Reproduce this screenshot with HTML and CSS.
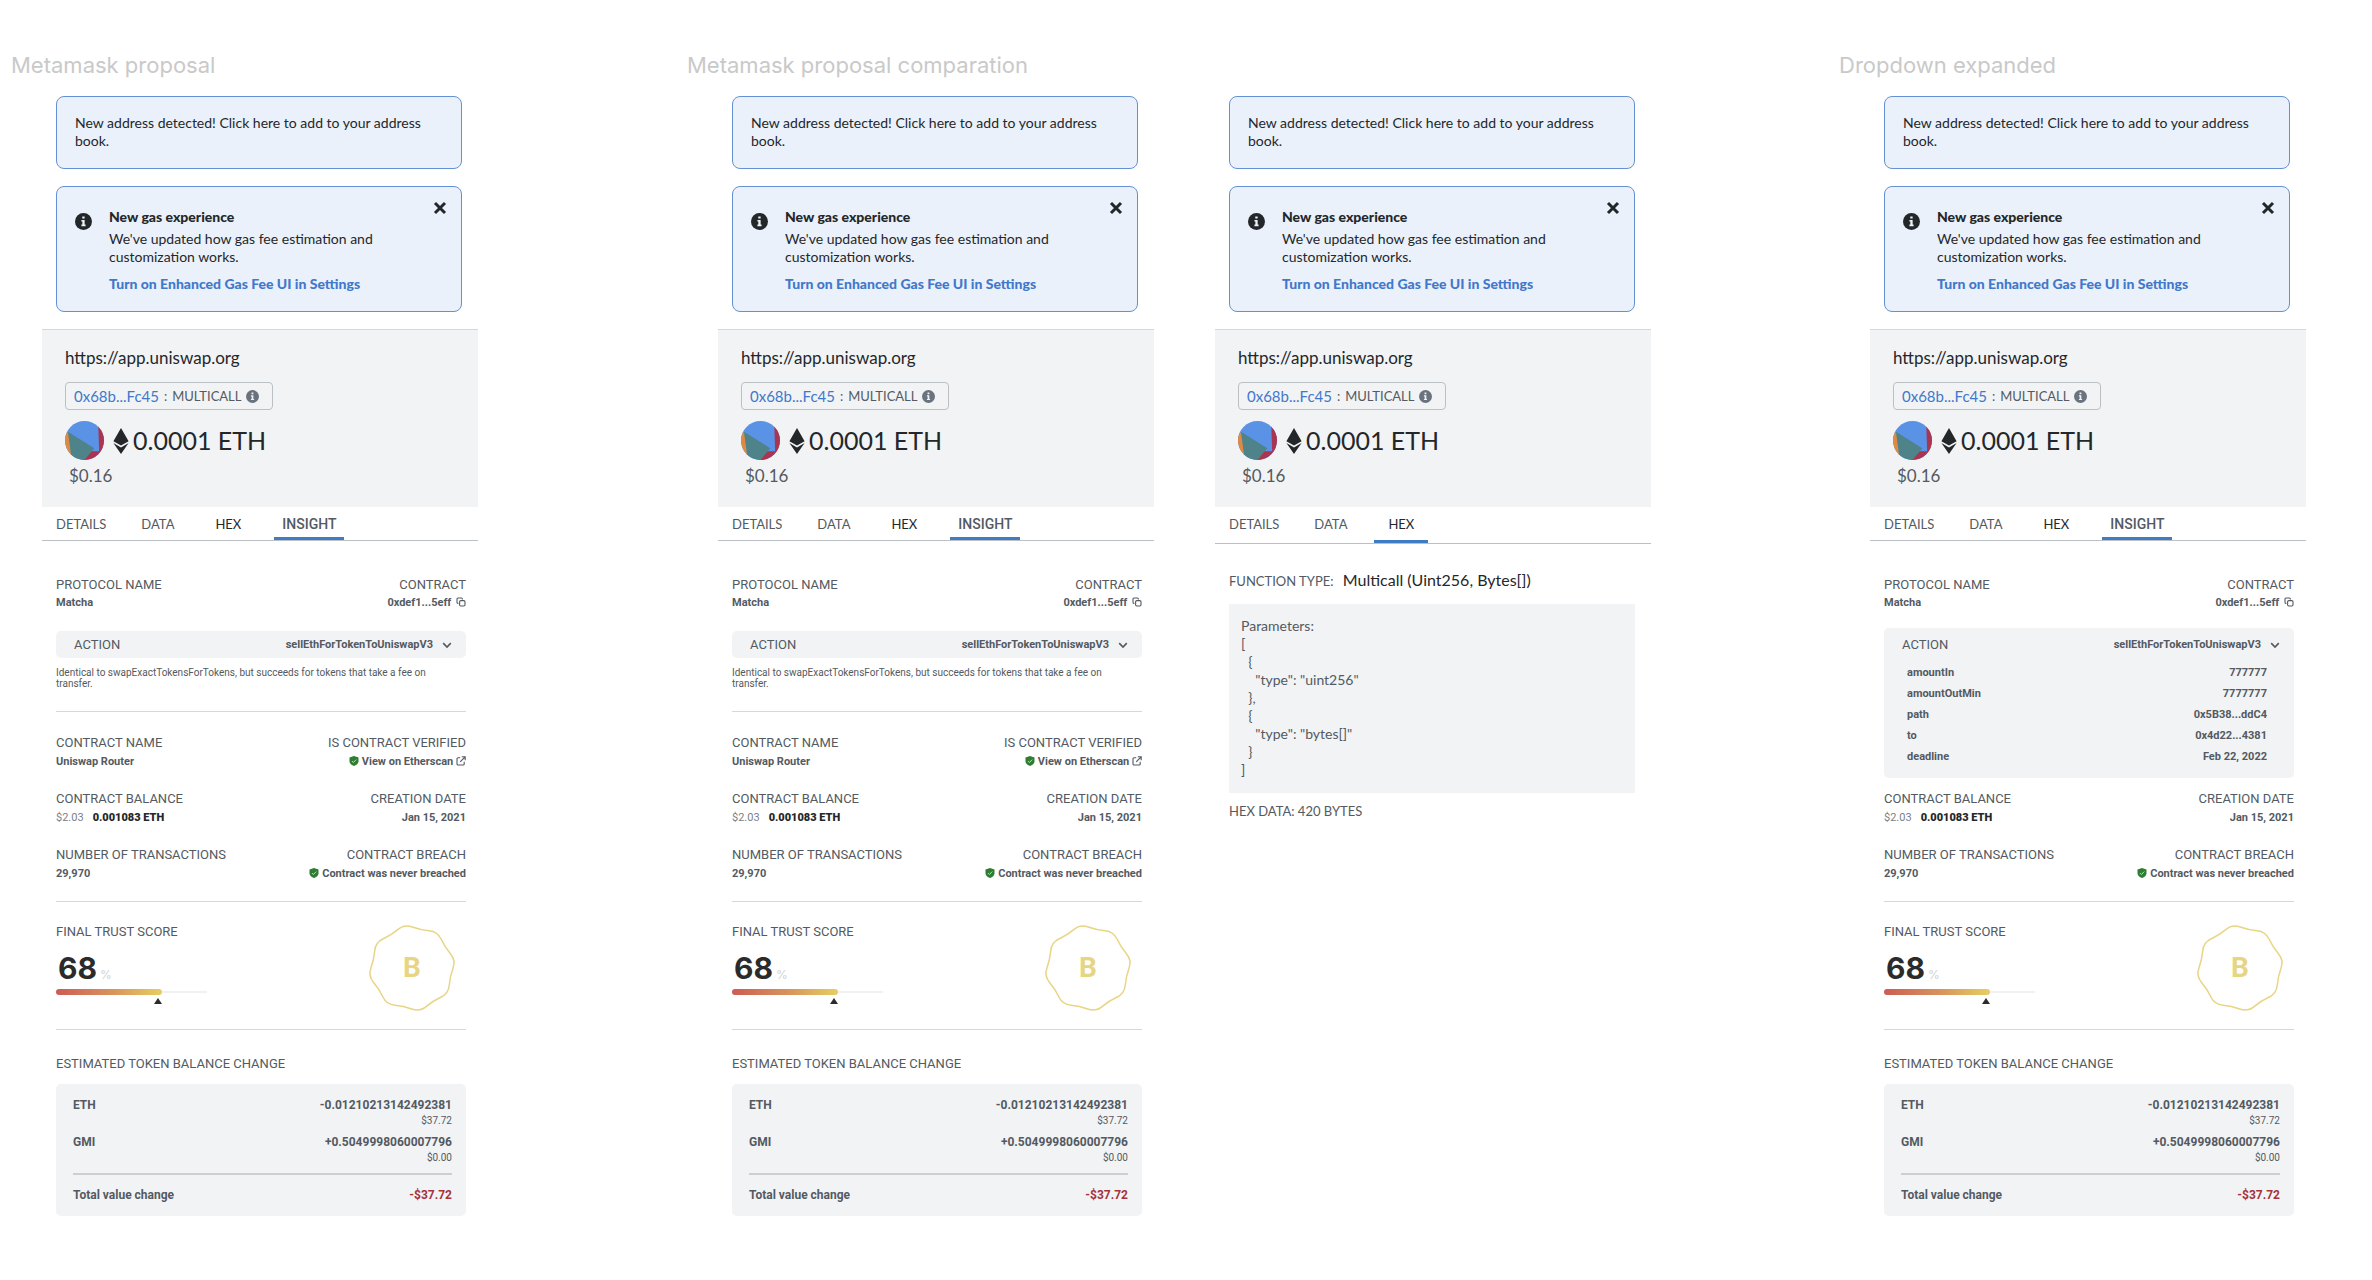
FILE: index.html
```
<!DOCTYPE html>
<html lang="en">
  <head>
    <meta charset="UTF-8" />
    <meta name="viewport" content="width=device-width, initial-scale=1" />
    <title>Metamask proposal</title>
    <link rel="stylesheet" href="styles.css">
  </head>
  <body>
    <!-- shared icons -->
    <svg class="sprite" aria-hidden="true">
      <symbol id="i-info" viewBox="0 0 18 18">
        <circle cx="9" cy="9" r="9" fill="currentColor" />
        <path class="info-mark" d="M7.7 3.6h2.5v2.3H7.7zM6.8 7.3h3.4v5h1v1.6H6.8v-1.6h1V8.9h-1z" />
      </symbol>
      <symbol id="i-close" viewBox="0 0 14 14">
        <path d="M2 2l10 10M12 2L2 12" fill="none" stroke="currentColor" stroke-width="3" />
      </symbol>
      <symbol id="i-avatar" viewBox="0 0 40 40">
        <clipPath id="round"><circle cx="20" cy="20" r="20" /></clipPath>
        <g clip-path="url(#round)">
          <path fill="#5a92e6" d="M0 0h40v40H0z" />
          <path fill="#dd8a45" d="M0 12l4 0 3 28H0z" />
          <path fill="#a93550" d="M34 0h6v40H18l8-9 9 0z" />
          <path fill="#4d8389" d="M3 11l27 17-10 12H7z" />
        </g>
      </symbol>
      <symbol id="i-eth" viewBox="0 0 16 26">
        <path fill="currentColor" d="M8 0l7.6 13.2L8 17.6.4 13.2zM.4 15.1L8 19.5l7.6-4.4L8 26z" />
      </symbol>
      <symbol id="i-copy" viewBox="0 0 10 10">
        <g fill="none" stroke="currentColor" stroke-width="1.1">
          <rect x="3.6" y="3.6" width="5.4" height="5.4" rx="1.2" />
          <path d="M2.4 6.4H1.9A1 1 0 0 1 1 5.4V2a1 1 0 0 1 1-1h3.400a1 1 0 0 1 1 1v.5" />
        </g>
      </symbol>
      <symbol id="i-chevron" viewBox="0 0 10 10">
        <path d="M1.2 3.100L5 7l3.800-3.900" fill="none" stroke="currentColor" stroke-width="1.600" />
      </symbol>
      <symbol id="i-shield" viewBox="0 0 9 10">
        <path fill="#2e7d32" d="M4.500 0L9 1.500v3.700c0 2.200-2 4-4.500 4.800C2 9.200 0 7.400 0 5.200V1.500z" />
        <path d="M2.400 5l1.500 1.500 2.800-2.900" fill="none" stroke="#b9e0bb" stroke-width="1" />
      </symbol>
      <symbol id="i-external" viewBox="0 0 10 10">
        <path d="M4.200 1.800H2a1 1 0 0 0-1 1V8a1 1 0 0 0 1 1h5.200a1 1 0 0 0 1-1V5.800M5.800.8h3.400v3.400M9 1L4.200 5.800" fill="none" stroke="currentColor" stroke-width="1.100" />
      </symbol>
      <symbol id="i-seal" viewBox="0 0 90 90">
        <path fill="none" stroke="#e8d584" stroke-width="1.500" d="M83.400 30.700Q89 37.200 86 45.300Q83 53.400 82.300 62Q81.600 70.600 73.800 74.200Q65.900 77.800 59.400 83.400Q52.800 89 44.700 86Q36.600 83 28 82.300Q19.400 81.600 15.800 73.800Q12.200 65.900 6.600 59.400Q1 52.800 4 44.700Q7 36.600 7.700 28Q8.400 19.400 16.300 15.800Q24.100 12.200 30.700 6.600Q37.200 1 45.300 4Q53.400 7 62 7.700Q70.600 8.400 74.200 16.300Q77.800 24.100 83.400 30.700Z" />
      </symbol>
    </svg>

    <main class="boards">
      <section class="board board-proposal">
        <h2 class="board-title">Metamask proposal</h2>
        <div class="screens">
          <article class="screen">
            <div class="notice">New address detected! Click here to add to your address book.</div>
            <div class="notice notice-gas">
              <svg class="notice-icon"><use href="#i-info" /></svg>
              <div class="notice-body">
                <strong>New gas experience</strong>
                <p>We've updated how gas fee estimation and customization works.</p>
                <a href="#">Turn on Enhanced Gas Fee UI in Settings</a>
              </div>
              <button class="notice-close" aria-label="Close"><svg><use href="#i-close" /></svg></button>
            </div>
            <header class="summary">
              <div class="origin">https://app.uniswap.org</div>
              <div class="chip"><a href="#">0x68b...Fc45</a> : <span>MULTICALL</span> <svg><use href="#i-info" /></svg></div>
              <div class="amount"><svg class="avatar"><use href="#i-avatar" /></svg><svg class="eth"><use href="#i-eth" /></svg>0.0001 ETH</div>
              <div class="fiat">$0.16</div>
            </header>
            <nav class="tabs">
              <button>DETAILS</button>
              <button>DATA</button>
              <button class="dark">HEX</button>
              <button class="insight active">INSIGHT</button>
            </nav>
            <div class="content">
              <div class="pair">
                <div><h3>PROTOCOL NAME</h3><p>Matcha</p></div>
                <div><h3>CONTRACT</h3><p>0xdef1...5eff <svg><use href="#i-copy" /></svg></p></div>
              </div>
              <div class="action">
                <button class="action-toggle"><span class="label">ACTION</span>sellEthForTokenToUniswapV3 <svg><use href="#i-chevron" /></svg></button>
              </div>
              <p class="description">Identical to swapExactTokensForTokens, but succeeds for tokens that take a fee on transfer.</p>
              <hr>
              <div class="facts">
                <div class="pair">
                  <div><h3>CONTRACT NAME</h3><p>Uniswap Router</p></div>
                  <div><h3>IS CONTRACT VERIFIED</h3><p><svg><use href="#i-shield" /></svg> <a href="#">View on Etherscan <svg><use href="#i-external" /></svg></a></p></div>
                </div>
                <div class="pair">
                  <div><h3>CONTRACT BALANCE</h3><p><span class="usd">$2.03</span><b>0.001083 ETH</b></p></div>
                  <div><h3>CREATION DATE</h3><p>Jan 15, 2021</p></div>
                </div>
                <div class="pair">
                  <div><h3>NUMBER OF TRANSACTIONS</h3><p>29,970</p></div>
                  <div><h3>CONTRACT BREACH</h3><p><svg><use href="#i-shield" /></svg> Contract was never breached</p></div>
                </div>
              </div>
              <hr>
              <div class="trust">
                <div class="score">
                  <h3>FINAL TRUST SCORE</h3>
                  <div class="score-value">68 <small>%</small></div>
                  <div class="meter"><div class="meter-fill" style="width: 70%"></div></div>
                </div>
                <div class="seal"><svg><use href="#i-seal" /></svg><span>B</span></div>
              </div>
              <hr>
              <h3 class="balance-title">ESTIMATED TOKEN BALANCE CHANGE</h3>
              <div class="balance">
                <table>
                  <tbody>
                    <tr><th>ETH</th><td>-0.01210213142492381<small>$37.72</small></td></tr>
                    <tr><th>GMI</th><td>+0.5049998060007796<small>$0.00</small></td></tr>
                  </tbody>
                  <tfoot>
                    <tr><th>Total value change</th><td class="loss">-$37.72</td></tr>
                  </tfoot>
                </table>
              </div>
            </div>
          </article>
        </div>
      </section>

      <section class="board board-comparation">
        <h2 class="board-title">Metamask proposal comparation</h2>
        <div class="screens">
          <article class="screen">
            <div class="notice">New address detected! Click here to add to your address book.</div>
            <div class="notice notice-gas">
              <svg class="notice-icon"><use href="#i-info" /></svg>
              <div class="notice-body">
                <strong>New gas experience</strong>
                <p>We've updated how gas fee estimation and customization works.</p>
                <a href="#">Turn on Enhanced Gas Fee UI in Settings</a>
              </div>
              <button class="notice-close" aria-label="Close"><svg><use href="#i-close" /></svg></button>
            </div>
            <header class="summary">
              <div class="origin">https://app.uniswap.org</div>
              <div class="chip"><a href="#">0x68b...Fc45</a> : <span>MULTICALL</span> <svg><use href="#i-info" /></svg></div>
              <div class="amount"><svg class="avatar"><use href="#i-avatar" /></svg><svg class="eth"><use href="#i-eth" /></svg>0.0001 ETH</div>
              <div class="fiat">$0.16</div>
            </header>
            <nav class="tabs">
              <button>DETAILS</button>
              <button>DATA</button>
              <button class="dark">HEX</button>
              <button class="insight active">INSIGHT</button>
            </nav>
            <div class="content">
              <div class="pair">
                <div><h3>PROTOCOL NAME</h3><p>Matcha</p></div>
                <div><h3>CONTRACT</h3><p>0xdef1...5eff <svg><use href="#i-copy" /></svg></p></div>
              </div>
              <div class="action">
                <button class="action-toggle"><span class="label">ACTION</span>sellEthForTokenToUniswapV3 <svg><use href="#i-chevron" /></svg></button>
              </div>
              <p class="description">Identical to swapExactTokensForTokens, but succeeds for tokens that take a fee on transfer.</p>
              <hr>
              <div class="facts">
                <div class="pair">
                  <div><h3>CONTRACT NAME</h3><p>Uniswap Router</p></div>
                  <div><h3>IS CONTRACT VERIFIED</h3><p><svg><use href="#i-shield" /></svg> <a href="#">View on Etherscan <svg><use href="#i-external" /></svg></a></p></div>
                </div>
                <div class="pair">
                  <div><h3>CONTRACT BALANCE</h3><p><span class="usd">$2.03</span><b>0.001083 ETH</b></p></div>
                  <div><h3>CREATION DATE</h3><p>Jan 15, 2021</p></div>
                </div>
                <div class="pair">
                  <div><h3>NUMBER OF TRANSACTIONS</h3><p>29,970</p></div>
                  <div><h3>CONTRACT BREACH</h3><p><svg><use href="#i-shield" /></svg> Contract was never breached</p></div>
                </div>
              </div>
              <hr>
              <div class="trust">
                <div class="score">
                  <h3>FINAL TRUST SCORE</h3>
                  <div class="score-value">68 <small>%</small></div>
                  <div class="meter"><div class="meter-fill" style="width: 70%"></div></div>
                </div>
                <div class="seal"><svg><use href="#i-seal" /></svg><span>B</span></div>
              </div>
              <hr>
              <h3 class="balance-title">ESTIMATED TOKEN BALANCE CHANGE</h3>
              <div class="balance">
                <table>
                  <tbody>
                    <tr><th>ETH</th><td>-0.01210213142492381<small>$37.72</small></td></tr>
                    <tr><th>GMI</th><td>+0.5049998060007796<small>$0.00</small></td></tr>
                  </tbody>
                  <tfoot>
                    <tr><th>Total value change</th><td class="loss">-$37.72</td></tr>
                  </tfoot>
                </table>
              </div>
            </div>
          </article>

          <article class="screen">
            <div class="notice">New address detected! Click here to add to your address book.</div>
            <div class="notice notice-gas">
              <svg class="notice-icon"><use href="#i-info" /></svg>
              <div class="notice-body">
                <strong>New gas experience</strong>
                <p>We've updated how gas fee estimation and customization works.</p>
                <a href="#">Turn on Enhanced Gas Fee UI in Settings</a>
              </div>
              <button class="notice-close" aria-label="Close"><svg><use href="#i-close" /></svg></button>
            </div>
            <header class="summary">
              <div class="origin">https://app.uniswap.org</div>
              <div class="chip"><a href="#">0x68b...Fc45</a> : <span>MULTICALL</span> <svg><use href="#i-info" /></svg></div>
              <div class="amount"><svg class="avatar"><use href="#i-avatar" /></svg><svg class="eth"><use href="#i-eth" /></svg>0.0001 ETH</div>
              <div class="fiat">$0.16</div>
            </header>
            <nav class="tabs tabs-tall">
              <button>DETAILS</button>
              <button>DATA</button>
              <button class="dark active">HEX</button>
            </nav>
            <div class="hex">
              <div class="function">FUNCTION TYPE: <span>Multicall (Uint256, Bytes[])</span></div>
              <pre>Parameters:
[
  {
    "type": "uint256"
  },
  {
    "type": "bytes[]"
  }
]</pre>
              <div class="hex-size">HEX DATA: 420 BYTES</div>
            </div>
          </article>
        </div>
      </section>

      <section class="board board-expanded">
        <h2 class="board-title">Dropdown expanded</h2>
        <div class="screens">
          <article class="screen">
            <div class="notice">New address detected! Click here to add to your address book.</div>
            <div class="notice notice-gas">
              <svg class="notice-icon"><use href="#i-info" /></svg>
              <div class="notice-body">
                <strong>New gas experience</strong>
                <p>We've updated how gas fee estimation and customization works.</p>
                <a href="#">Turn on Enhanced Gas Fee UI in Settings</a>
              </div>
              <button class="notice-close" aria-label="Close"><svg><use href="#i-close" /></svg></button>
            </div>
            <header class="summary">
              <div class="origin">https://app.uniswap.org</div>
              <div class="chip"><a href="#">0x68b...Fc45</a> : <span>MULTICALL</span> <svg><use href="#i-info" /></svg></div>
              <div class="amount"><svg class="avatar"><use href="#i-avatar" /></svg><svg class="eth"><use href="#i-eth" /></svg>0.0001 ETH</div>
              <div class="fiat">$0.16</div>
            </header>
            <nav class="tabs">
              <button>DETAILS</button>
              <button>DATA</button>
              <button class="dark">HEX</button>
              <button class="insight active">INSIGHT</button>
            </nav>
            <div class="content">
              <div class="pair">
                <div><h3>PROTOCOL NAME</h3><p>Matcha</p></div>
                <div><h3>CONTRACT</h3><p>0xdef1...5eff <svg><use href="#i-copy" /></svg></p></div>
              </div>
              <div class="action action-open">
                <button class="action-toggle" aria-expanded="true"><span class="label">ACTION</span>sellEthForTokenToUniswapV3 <svg><use href="#i-chevron" /></svg></button>
                <table class="params">
                  <tr><th>amountIn</th><td>777777</td></tr>
                  <tr><th>amountOutMin</th><td>7777777</td></tr>
                  <tr><th>path</th><td>0x5B38...ddC4</td></tr>
                  <tr><th>to</th><td>0x4d22...4381</td></tr>
                  <tr><th>deadline</th><td>Feb 22, 2022</td></tr>
                </table>
              </div>
              <div class="facts">
                <div class="pair">
                  <div><h3>CONTRACT BALANCE</h3><p><span class="usd">$2.03</span><b>0.001083 ETH</b></p></div>
                  <div><h3>CREATION DATE</h3><p>Jan 15, 2021</p></div>
                </div>
                <div class="pair">
                  <div><h3>NUMBER OF TRANSACTIONS</h3><p>29,970</p></div>
                  <div><h3>CONTRACT BREACH</h3><p><svg><use href="#i-shield" /></svg> Contract was never breached</p></div>
                </div>
              </div>
              <hr>
              <div class="trust">
                <div class="score">
                  <h3>FINAL TRUST SCORE</h3>
                  <div class="score-value">68 <small>%</small></div>
                  <div class="meter"><div class="meter-fill" style="width: 70%"></div></div>
                </div>
                <div class="seal"><svg><use href="#i-seal" /></svg><span>B</span></div>
              </div>
              <hr>
              <h3 class="balance-title">ESTIMATED TOKEN BALANCE CHANGE</h3>
              <div class="balance">
                <table>
                  <tbody>
                    <tr><th>ETH</th><td>-0.01210213142492381<small>$37.72</small></td></tr>
                    <tr><th>GMI</th><td>+0.5049998060007796<small>$0.00</small></td></tr>
                  </tbody>
                  <tfoot>
                    <tr><th>Total value change</th><td class="loss">-$37.72</td></tr>
                  </tfoot>
                </table>
              </div>
            </div>
          </article>
        </div>
      </section>
    </main>
  </body>
</html>
```
FILE: styles.css
```
:root {
  --text: #24272a;
  --text-muted: #535a61;
  --blue: #4178cb;
  --panel: #f2f3f5;
  --line: #d6d9dc;
  --gold: #e8d584;
}

* {
  box-sizing: border-box;
}

body {
  margin: 0;
  background: #fff;
  color: var(--text);
  font: 14px/18px Lato, sans-serif;
}

h2, h3, p, pre {
  margin: 0;
}

button {
  border: 0;
  padding: 0;
  background: none;
  color: inherit;
  font: inherit;
  cursor: pointer;
}

a {
  color: inherit;
  text-decoration: none;
}

table {
  width: 100%;
  border-collapse: collapse;
}

th, td {
  padding: 0;
  text-align: left;
  vertical-align: top;
}

td {
  text-align: right;
}

.sprite {
  position: absolute;
  width: 0;
  height: 0;
}

/* boards */
.boards {
  display: grid;
  grid-template-columns: 676fr 1152fr 467fr;
  padding: 50px 66px 50px 11px;
}

.board-title {
  color: #c9c9c9;
  font: 400 22px/30px Inter, sans-serif;
}

.screens {
  display: flex;
  gap: 61px;
  padding: 16px 0 0 31px;
}

.board-proposal .screens {
  padding-right: 209px;
}

.board-comparation .screens {
  padding-right: 188px;
}

.screen {
  flex: 1;
  min-width: 0;
}

/* notices */
.notice {
  margin: 0 16px 17px 14px;
  padding: 17px 18px 18px;
  border: 1px solid #6491d3;
  border-radius: 8px;
  background: #eaf1fa;
}

.notice-gas {
  display: flex;
  padding: 21px 14px 18px 18px;
}

.notice-icon {
  flex: none;
  width: 17px;
  height: 17px;
  margin-top: 5px;
}

.info-mark {
  fill: #eef2f8;
}

.notice-body {
  flex: 1;
  margin-left: 17px;
}

.notice-body strong {
  display: block;
  margin-bottom: 4px;
  font-weight: 900;
}

.notice-body p {
  max-width: 280px;
  margin-bottom: 9px;
}

.notice-body a {
  display: block;
  color: var(--blue);
  font-weight: 900;
}

.notice-close {
  align-self: flex-start;
  margin-top: -7px;
}

.notice-close svg {
  display: block;
  width: 14px;
  height: 14px;
}

/* transaction summary */
.summary {
  padding: 17px 23px 20px;
  border-top: 1px solid var(--line);
  background: var(--panel);
}

.origin {
  font-size: 17px;
  line-height: 22px;
}

.chip {
  display: flex;
  align-items: center;
  gap: 5px;
  width: max-content;
  height: 28px;
  margin: 13px 0 11px;
  padding: 0 13px 0 8px;
  border: 1px solid #bbc0c5;
  border-radius: 4px;
  color: var(--text-muted);
  font-size: 13px;
}

.chip a {
  color: var(--blue);
  font-size: 15px;
}

.chip svg {
  width: 13px;
  height: 13px;
  color: #6a737d;
}

.amount {
  display: flex;
  align-items: center;
  font-size: 25px;
  line-height: 39px;
}

.avatar {
  width: 39px;
  height: 39px;
  margin-right: 9px;
}

.eth {
  width: 16px;
  height: 26px;
  margin-right: 4px;
}

.fiat {
  margin: 5px 0 0 4px;
  color: var(--text-muted);
  font-size: 17px;
  line-height: 22px;
}

/* tabs */
.tabs {
  display: flex;
  height: 34px;
  padding-left: 6px;
  border-bottom: 1px solid #bbc0c5;
}

.tabs-tall {
  height: 37px;
}

.tabs button {
  margin-right: 19px;
  padding: 4px 8px 0;
  border-bottom: 3px solid transparent;
  color: var(--text-muted);
  font-size: 13px;
  line-height: 18px;
}

.tabs-tall button {
  padding-bottom: 3px;
}

.tabs .dark {
  padding-right: 14px;
  padding-left: 14px;
  color: var(--text);
}

.tabs .insight {
  font-family: Roboto, sans-serif;
  font-size: 14px;
  font-weight: 500;
}

.tabs .active {
  border-color: #3f7cc4;
}

/* insight tab */
.content {
  padding: 35px 12px 0 14px;
  color: var(--text-muted);
  font: 700 11px/18px Roboto, sans-serif;
}

.content h3 {
  font-size: 13px;
  font-weight: 400;
}

.pair {
  display: flex;
  justify-content: space-between;
}

.pair > :last-child {
  text-align: right;
}

.pair svg {
  width: 10px;
  height: 10px;
  margin-left: 2px;
  vertical-align: -1px;
}

.facts {
  display: grid;
  gap: 19px;
}

.facts p {
  line-height: 19px;
}

.facts svg {
  margin: 0;
}

.usd {
  margin-right: 9px;
  color: #7b8188;
  font-weight: 400;
}

.facts b {
  color: var(--text);
}

.content hr {
  margin: 22px 0;
  border: 0;
  border-top: 1px solid var(--line);
}

.facts + hr {
  margin: 18px 0 21px;
}

.trust + hr {
  margin: 0 0 25px;
}

.action {
  margin-top: 19px;
  border-radius: 5px;
  background: var(--panel);
}

.action-toggle {
  display: flex;
  align-items: center;
  width: 100%;
  height: 27px;
  padding: 0 14px 0 18px;
}

.action-toggle .label {
  margin-right: auto;
  font-size: 13px;
  font-weight: 400;
}

.action-toggle svg {
  width: 10px;
  height: 10px;
  margin-left: 9px;
}

.action-open {
  margin: 16px 0 12px;
  padding: 3px 0 11px;
}

.params {
  margin-top: 4px;
}

.params th, .params td {
  line-height: 21px;
}

.params th {
  padding-left: 23px;
}

.params td {
  padding-right: 27px;
}

.description {
  margin-top: 9px;
  padding-right: 30px;
  font-size: 10px;
  font-weight: 400;
  line-height: 11px;
}

.trust {
  display: flex;
  justify-content: space-between;
  height: 106px;
}

.score {
  width: 151px;
}

.score-value {
  display: flex;
  align-items: baseline;
  gap: 3px;
  height: 32px;
  margin: 11px 0 5px 2px;
  color: #2b2b2b;
  font: 700 30px/32px Inter, sans-serif;
}

.score-value small {
  color: #d3d3d3;
  font-size: 12px;
  font-weight: 400;
  line-height: 14px;
}

.meter {
  display: flex;
  align-items: center;
  background: linear-gradient(#f1f1f1, #f1f1f1) center / 100% 2px no-repeat;
}

.meter-fill {
  position: relative;
  height: 6px;
  border-radius: 3px;
  background: linear-gradient(90deg, #cd5c53, #d9955c 55%, #e6cf62);
}

/* marker under the end of the bar */
.meter-fill::after {
  content: "";
  position: absolute;
  top: 9px;
  right: 0;
  border: 4px solid transparent;
  border-top: 0;
  border-bottom: 6px solid #2b2b2b;
}

.seal {
  display: grid;
  place-items: center;
  align-self: flex-start;
  margin-right: 9px;
}

.seal svg, .seal span {
  grid-area: 1 / 1;
}

.seal svg {
  width: 90px;
  height: 90px;
}

.seal span {
  color: var(--gold);
  font-size: 28px;
}

.balance {
  margin-top: 11px;
  padding: 12px 14px 12px 17px;
  border-radius: 5px;
  background: var(--panel);
  font-size: 12px;
}

.balance tbody td, .balance tbody th {
  padding-bottom: 5px;
}

.balance tbody tr:last-child td {
  padding-bottom: 8px;
}

.balance small {
  display: block;
  font-size: 10px;
  font-weight: 400;
  line-height: 14px;
}

.balance tfoot {
  border-top: 2px solid #cbcfd3;
}

.balance tfoot th, .balance tfoot td {
  padding-top: 11px;
}

.balance .loss {
  color: #a5323c;
}

/* hex tab */
.hex {
  padding: 27px 16px 0 14px;
  color: var(--text-muted);
}

.function, .hex-size {
  font-size: 13px;
}

.function span {
  margin-left: 6px;
  color: var(--text);
  font-size: 16px;
}

.hex pre {
  margin: 14px 0 9px;
  padding: 13px 12px 14px;
  background: var(--panel);
  font: inherit;
}
```
